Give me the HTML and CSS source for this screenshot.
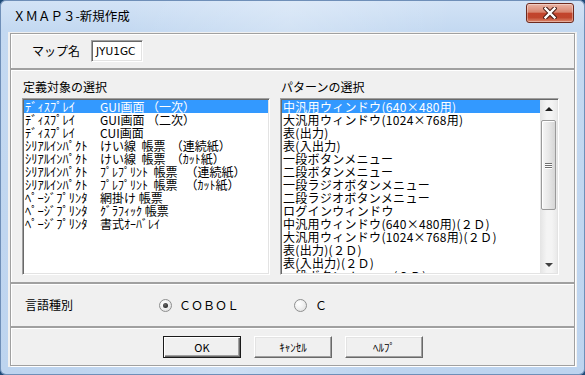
FILE: index.html
```html
<!DOCTYPE html>
<html lang="ja">
<head>
<meta charset="utf-8">
<title>ＸＭＡＰ３-新規作成</title>
<link rel="stylesheet" href="styles.css">
</head>
<body>
<div class="window">
  <div class="titlebar">
    <span class="title">ＸＭＡＰ３-新規作成</span>
    <div class="close">
      <svg width="14" height="12" viewBox="0 0 14 12"><path d="M2.5 1.5 L11.5 10.5 M11.5 1.5 L2.5 10.5" stroke="#4a1c14" stroke-width="4.4" stroke-linecap="square" fill="none"/><path d="M2.5 1.5 L11.5 10.5 M11.5 1.5 L2.5 10.5" stroke="#ffffff" stroke-width="2.4" stroke-linecap="square" fill="none"/></svg>
    </div>
  </div>
  <div class="client">
    <div class="panel p-map">
      <span class="lbl">マップ名</span>
      <div class="field">JYU1GC</div>
    </div>
    <div class="panel p-lists">
      <div class="col col-left">
        <div class="cap">定義対象の選択</div>
        <div class="listbox left">
          <div class="row sel"><span class="c1">ﾃﾞｨｽﾌﾟﾚｲ</span><span class="c2">GUI画面 （一次）</span></div>
          <div class="row"><span class="c1">ﾃﾞｨｽﾌﾟﾚｲ</span><span class="c2">GUI画面 （二次）</span></div>
          <div class="row"><span class="c1">ﾃﾞｨｽﾌﾟﾚｲ</span><span class="c2">CUI画面</span></div>
          <div class="row"><span class="c1">ｼﾘｱﾙｲﾝﾊﾟｸﾄ</span><span class="c2">けい線  帳票  （連続紙）</span></div>
          <div class="row"><span class="c1">ｼﾘｱﾙｲﾝﾊﾟｸﾄ</span><span class="c2">けい線  帳票  （ｶｯﾄ紙）</span></div>
          <div class="row"><span class="c1">ｼﾘｱﾙｲﾝﾊﾟｸﾄ</span><span class="c2">ﾌﾟﾚﾌﾟﾘﾝﾄ  帳票   （連続紙）</span></div>
          <div class="row"><span class="c1">ｼﾘｱﾙｲﾝﾊﾟｸﾄ</span><span class="c2">ﾌﾟﾚﾌﾟﾘﾝﾄ  帳票   （ｶｯﾄ紙）</span></div>
          <div class="row"><span class="c1">ﾍﾟｰｼﾞﾌﾟﾘﾝﾀ</span><span class="c2">網掛け 帳票</span></div>
          <div class="row"><span class="c1">ﾍﾟｰｼﾞﾌﾟﾘﾝﾀ</span><span class="c2">ｸﾞﾗﾌｨｯｸ 帳票</span></div>
          <div class="row"><span class="c1">ﾍﾟｰｼﾞﾌﾟﾘﾝﾀ</span><span class="c2">書式ｵｰﾊﾞﾚｲ</span></div>
        </div>
      </div>
      <div class="col col-right">
        <div class="cap">パターンの選択</div>
        <div class="listbox right">
          <div class="items">
            <div class="row sel">中汎用ウィンドウ(640×480用)</div>
            <div class="row">大汎用ウィンドウ(1024×768用)</div>
            <div class="row">表(出力)</div>
            <div class="row">表(入出力)</div>
            <div class="row">一段ボタンメニュー</div>
            <div class="row">二段ボタンメニュー</div>
            <div class="row">一段ラジオボタンメニュー</div>
            <div class="row">二段ラジオボタンメニュー</div>
            <div class="row">ログインウィンドウ</div>
            <div class="row">中汎用ウィンドウ(640×480用)(２Ｄ)</div>
            <div class="row">大汎用ウィンドウ(1024×768用)(２Ｄ)</div>
            <div class="row">表(出力)(２Ｄ)</div>
            <div class="row">表(入出力)(２Ｄ)</div>
            <div class="row">一段ボタンメニュー(２Ｄ)</div>
          </div>
          <div class="vscroll">
            <div class="arrow up"><span class="tri-up"></span></div>
            <div class="track">
              <div class="thumb"><span class="grip"></span><span class="grip"></span><span class="grip"></span></div>
            </div>
            <div class="arrow down"><span class="tri-down"></span></div>
          </div>
        </div>
      </div>
    </div>
    <div class="panel p-lang">
      <span class="lbl">言語種別</span>
      <label class="opt opt-cobol"><span class="radio on"></span><span class="opt-text">ＣＯＢＯＬ</span></label>
      <label class="opt opt-c"><span class="radio"></span><span class="opt-text">Ｃ</span></label>
    </div>
    <div class="panel p-btns">
      <div class="btn default">OK</div>
      <div class="btn">ｷｬﾝｾﾙ</div>
      <div class="btn">ﾍﾙﾌﾟ</div>
    </div>
  </div>
</div>
</body>
</html>
```

FILE: styles.css
```css
* { box-sizing: border-box; }
html, body { margin: 0; padding: 0; }
body {
  width: 585px;
  height: 375px;
  overflow: hidden;
  background: #1d4a78;
  font-family: "Noto Sans CJK JP", "Noto Sans", sans-serif;
  font-size: 12px;
  color: #000;
}
.window {
  width: 585px;
  height: 375px;
  display: flex;
  flex-direction: column;
  padding: 0 8px 8px 8px;
  border-radius: 6px;
  background:
    linear-gradient(100deg, rgba(255,255,255,0) 20%, rgba(255,255,255,0.25) 45%, rgba(255,255,255,0) 70%),
    linear-gradient(to bottom, #d3e3f6 0px, #c4d9f1 30px, #bdd4ef 100%);
  box-shadow: inset 0 0 0 1px #6f8fb8;
}
.titlebar {
  height: 32px;
  display: flex;
  align-items: flex-start;
  justify-content: space-between;
}
.title {
  padding: 8px 0 0 5px;
  font-size: 12.5px;
  line-height: 16px;
  color: #000;
}
.close {
  margin: 3px 3px 0 0;
  width: 48px;
  height: 20px;
  border: 1px solid #6e2a1e;
  border-radius: 3px;
  background: linear-gradient(to bottom, #eab4a5 0%, #d88670 45%, #c2442c 52%, #c0462d 75%, #dc8a6e 100%);
  box-shadow: inset 0 0 0 1px rgba(255,255,255,0.35);
  display: flex;
  align-items: center;
  justify-content: center;
}
.client {
  flex: 1;
  background: #f0f0f0;
  padding: 1px 2px;
  display: flex;
  flex-direction: column;
}
.panel {
  border: 1px solid #a0a0a0;
  box-shadow: inset 1px 1px 0 #fff, 1px 1px 0 #fff;
}
.p-map {
  height: 36px;
  display: flex;
  align-items: center;
  padding-left: 21px;
}
.lbl { font-size: 12px; line-height: 14px; }
.field {
  margin-left: 11px;
  width: 52px;
  height: 22px;
  background: #fff;
  border: 1px solid;
  border-color: #a0a0a0 #fff #fff #a0a0a0;
  box-shadow: inset 1px 1px 0 #696969, inset -1px -1px 0 #e3e3e3;
  font-family: "DejaVu Sans", sans-serif;
  font-size: 10.5px;
  line-height: 20px;
  padding-left: 4px;
}
.p-lists {
  height: 214px;
  display: flex;
  gap: 10px;
  padding: 10px 15px 7px 11px;
}
.col { display: flex; flex-direction: column; }
.col-left { width: 248px; }
.col-right { width: 279px; }
.cap {
  height: 14px;
  line-height: 14px;
  margin-bottom: 4px;
  padding-left: 1px;
}
.listbox {
  height: 177px;
  background: #fff;
  border: 1px solid;
  border-color: #a0a0a0 #fff #fff #a0a0a0;
  box-shadow: inset 1px 1px 0 #696969, inset -1px -1px 0 #e3e3e3;
  padding: 1px;
  overflow: hidden;
}
.row {
  height: 13px;
  line-height: 13px;
  white-space: pre;
  padding-left: 1px;
}
.row.sel { background: #3399ff; color: #fff; }
.c1 { display: inline-block; width: 75px; font-size: 12.5px; }
.listbox.right { display: flex; }
.items { flex: 1; overflow: hidden; }
.items .row { letter-spacing: 0.3px; }
.vscroll {
  width: 17px;
  display: flex;
  flex-direction: column;
  background: linear-gradient(to right, #e4e4e4, #f4f4f4 40%, #f4f4f4 70%, #e9e9e9);
}
.arrow {
  height: 17px;
  display: flex;
  align-items: center;
  justify-content: center;
}
.tri-up {
  width: 0; height: 0;
  border-left: 4px solid transparent;
  border-right: 4px solid transparent;
  border-bottom: 4px solid #202020;
}
.tri-down {
  width: 0; height: 0;
  border-left: 4px solid transparent;
  border-right: 4px solid transparent;
  border-top: 4px solid #404040;
}
.track { flex: 1; padding: 3px 1px 0 1px; }
.thumb {
  height: 90px;
  border: 1px solid #9a9a9a;
  border-radius: 2px;
  background: linear-gradient(to right, #f6f6f6 0%, #e8e8e8 50%, #d6d6d6 100%);
  box-shadow: inset 1px 1px 0 #fff;
  display: flex;
  flex-direction: column;
  align-items: center;
  justify-content: center;
  gap: 1px;
}
.grip {
  width: 7px;
  height: 1px;
  background: #6f6f6f;
  box-shadow: 0 1px 0 #fff;
}
.p-lang {
  height: 44px;
  display: flex;
  align-items: center;
  padding-left: 14px;
}
.opt { display: flex; align-items: center; gap: 7px; }
.opt-cobol { margin-left: 86px; }
.opt-c { margin-left: 55px; gap: 8px; }
.opt-text { font-size: 12px; line-height: 14px; }
.radio {
  width: 13px;
  height: 13px;
  border-radius: 50%;
  border: 1px solid #8e8f8f;
  background: radial-gradient(circle at 35% 35%, #ffffff 0%, #f1f1f1 45%, #d9d9d9 100%);
  display: flex;
  align-items: center;
  justify-content: center;
}
.radio.on::after {
  content: "";
  width: 5px;
  height: 5px;
  border-radius: 50%;
  background: radial-gradient(circle at 40% 35%, #6a6a6a, #141414);
}
.p-btns {
  height: 39px;
  display: flex;
  align-items: center;
  justify-content: center;
  gap: 13px;
  padding-left: 1px;
}
.btn {
  width: 78px;
  height: 22px;
  background: #f0f0f0;
  border: 1px solid;
  border-color: #fff #696969 #696969 #fff;
  box-shadow: inset -1px -1px 0 #a0a0a0, inset 1px 1px 0 #e3e3e3;
  display: flex;
  align-items: center;
  justify-content: center;
  font-size: 11px;
  line-height: 14px;
}
.btn.default {
  border: 1px solid #1a1a1a;
  box-shadow: inset 1px 1px 0 #fff, inset -1px -1px 0 #696969, inset -2px -2px 0 #a0a0a0;
}
```
